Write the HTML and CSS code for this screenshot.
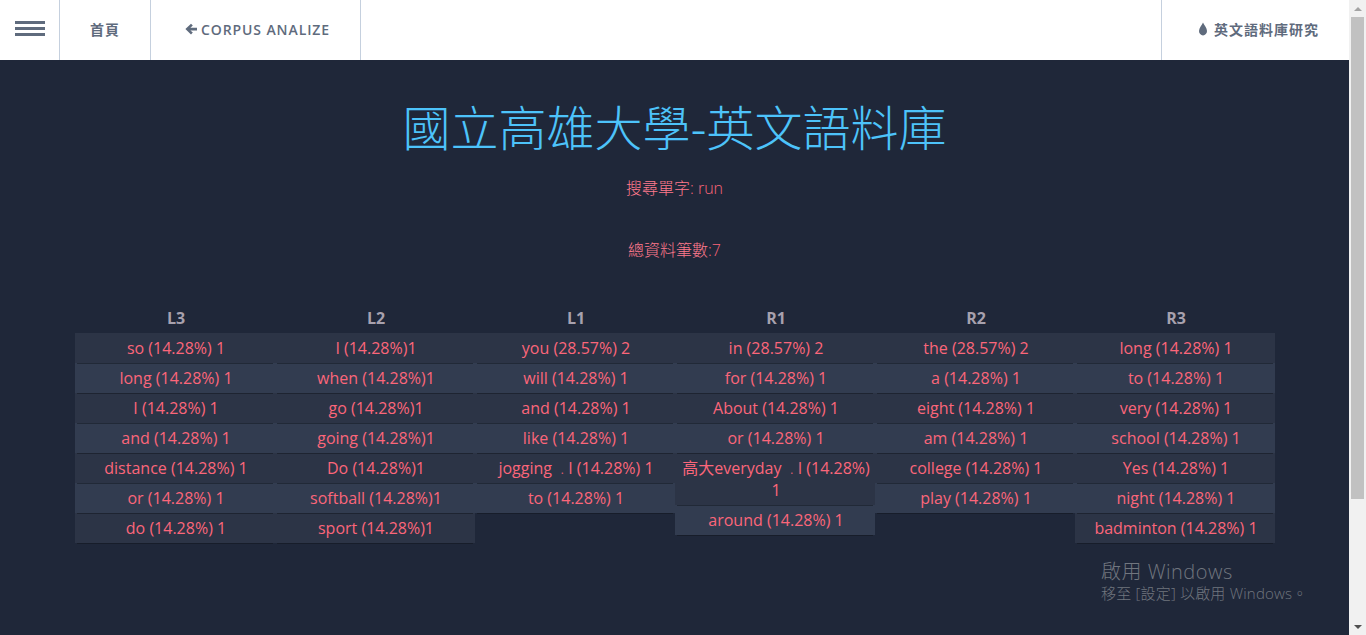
FILE: index.html
```html
<!DOCTYPE html>
<html lang="zh-Hant">
  <head>
    <meta charset="UTF-8" />
    <title>國立高雄大學-英文語料庫</title>
    <link rel="stylesheet" href="styles.css">
  </head>
  <body>
    <div class="page">
      <nav class="topbar">
        <a class="menu-btn" href="#"><span></span><span></span><span></span></a>
        <a class="nav-item nav-home" href="#">首頁</a>
        <a class="nav-item nav-back" href="#">
          <svg class="icon-arrow" viewBox="0 0 12 12"><path d="M6 .8 L7.8 2.6 L5.4 4.8 H12 V7.4 H5.4 L7.8 9.6 L6 11.4 L.4 6.1 Z"/></svg>
          CORPUS ANALIZE
        </a>
        <a class="nav-item nav-right" href="#">
          <svg class="icon-drop" viewBox="0 0 10 14"><path d="M5 0.5 C6 3 9 6 9 9 A4 4.4 0 0 1 1 9 C1 6 4 3 5 0.5 Z"/></svg>
          英文語料庫研究
        </a>
      </nav>

      <main class="content">
        <h1 class="title">國立高雄大學-英文語料庫</h1>
        <p class="info info-word"><span class="zh">搜尋單字</span>: run</p>
        <p class="info info-total"><span class="zh">總資料筆數</span>:7</p>

        <div class="columns">
          <div class="col">
            <h4>L3</h4>
            <div class="cell">so (14.28%) 1</div>
            <div class="cell">long (14.28%) 1</div>
            <div class="cell">I (14.28%) 1</div>
            <div class="cell">and (14.28%) 1</div>
            <div class="cell">distance (14.28%) 1</div>
            <div class="cell">or (14.28%) 1</div>
            <div class="cell">do (14.28%) 1</div>
          </div>
          <div class="col">
            <h4>L2</h4>
            <div class="cell">I (14.28%)1</div>
            <div class="cell">when (14.28%)1</div>
            <div class="cell">go (14.28%)1</div>
            <div class="cell">going (14.28%)1</div>
            <div class="cell">Do (14.28%)1</div>
            <div class="cell">softball (14.28%)1</div>
            <div class="cell">sport (14.28%)1</div>
          </div>
          <div class="col">
            <h4>L1</h4>
            <div class="cell">you (28.57%) 2</div>
            <div class="cell">will (14.28%) 1</div>
            <div class="cell">and (14.28%) 1</div>
            <div class="cell">like (14.28%) 1</div>
            <div class="cell">jogging <span class="dot">﹒</span>I (14.28%) 1</div>
            <div class="cell">to (14.28%) 1</div>
          </div>
          <div class="col">
            <h4>R1</h4>
            <div class="cell">in (28.57%) 2</div>
            <div class="cell">for (14.28%) 1</div>
            <div class="cell">About (14.28%) 1</div>
            <div class="cell">or (14.28%) 1</div>
            <div class="cell"><span class="first-line">高大everyday <span class="dot">﹒</span>I (14.28%)</span> 1</div>
            <div class="cell">around (14.28%) 1</div>
          </div>
          <div class="col">
            <h4>R2</h4>
            <div class="cell">the (28.57%) 2</div>
            <div class="cell">a (14.28%) 1</div>
            <div class="cell">eight (14.28%) 1</div>
            <div class="cell">am (14.28%) 1</div>
            <div class="cell">college (14.28%) 1</div>
            <div class="cell">play (14.28%) 1</div>
          </div>
          <div class="col">
            <h4>R3</h4>
            <div class="cell">long (14.28%) 1</div>
            <div class="cell">to (14.28%) 1</div>
            <div class="cell">very (14.28%) 1</div>
            <div class="cell">school (14.28%) 1</div>
            <div class="cell">Yes (14.28%) 1</div>
            <div class="cell">night (14.28%) 1</div>
            <div class="cell">badminton (14.28%) 1</div>
          </div>
        </div>
      </main>

      <div class="watermark">
        <div class="wm-big">啟用 Windows</div>
        <div class="wm-small">移至 [設定] 以啟用 Windows。</div>
      </div>
    </div>

    <div class="scrollbar">
      <div class="sb-arrow sb-up"></div>
      <div class="sb-thumb"></div>
      <div class="sb-arrow sb-down"></div>
    </div>
  </body>
</html>
```

FILE: styles.css
```css
html, body {
  margin: 0;
  padding: 0;
  height: 100%;
  overflow: hidden;
}
body {
  display: flex;
  font-family: "Open Sans", "Noto Sans CJK TC", sans-serif;
  background: #1f2739;
}
.page {
  position: relative;
  flex: 1;
  min-width: 0;
}

/* barra in alto */
.topbar {
  display: flex;
  height: 60px;
  background: #fff;
}
.topbar a {
  text-decoration: none;
  color: #5f6b7d;
}
.menu-btn {
  box-sizing: border-box;
  width: 60px;
  padding-bottom: 3px;
  display: flex;
  flex-direction: column;
  justify-content: center;
  align-items: center;
  gap: 3px;
  border-right: 1px solid #c5d0de;
}
.menu-btn span {
  display: block;
  width: 30px;
  height: 3px;
  background: #5f6b7d;
}
.nav-item {
  display: flex;
  align-items: center;
  justify-content: center;
  padding-bottom: 2px;
  font-size: 14px;
  font-weight: 600;
  letter-spacing: 1px;
  border-right: 1px solid #c5d0de;
}
.nav-home {
  width: 90px;
  font-weight: 700;
}
.nav-back {
  width: 205px;
  padding-left: 4px;
  gap: 4px;
  letter-spacing: .9px;
}
.nav-right {
  margin-left: auto;
  width: 181px;
  padding-left: 6px;
  gap: 6px;
  font-weight: 700;
  border-right: none;
  border-left: 1px solid #c5d0de;
}
.icon-arrow {
  width: 12px;
  height: 12px;
  fill: #5f6b7d;
}
.icon-drop {
  width: 10px;
  height: 14px;
  fill: #5f6b7d;
}

/* contenuto */
.content {
  padding: 0 75px;
  text-align: center;
}
.title {
  margin: 0;
  padding-top: 30px;
  font-family: "Noto Sans CJK TC", sans-serif;
  font-size: 48px;
  font-weight: 300;
  line-height: 70px;
  color: #4dc3fa;
}
.info {
  margin: 0;
  font-size: 16px;
  font-weight: 300;
  line-height: 22px;
  color: #fb667a;
}
.info .zh {
  color: #ff7a8d;
}
.info-word {
  padding-top: 17px;
}
.info-total {
  padding-top: 40px;
}
.columns {
  display: flex;
  align-items: flex-start;
  margin-top: 39px;
}
.col {
  width: 200px;
  flex: none;
}
.col h4 {
  margin: 0;
  padding-left: 2px;
  height: 33px;
  font-size: 16px;
  font-weight: 700;
  line-height: 36px;
  color: #a7a1ae;
}
.cell {
  position: relative;
  padding: 4px 1px 4px 3px;
  font-size: 16px;
  line-height: 22px;
  color: #fb667a;
}
.cell:nth-of-type(even) {
  background: #323c50;
}
.cell:nth-of-type(odd) {
  background: #2c3446;
}
/* ombra sotto ogni riga */
.cell::after {
  content: "";
  position: absolute;
  left: 2px;
  right: 2px;
  bottom: -1px;
  height: 1px;
  background: rgba(14, 17, 25, .45);
  z-index: 1;
}
.first-line {
  display: block;
}
.dot {
  font-size: 12px;
  line-height: 0;
}

/* scritta di attivazione */
.watermark {
  position: absolute;
  left: 1101px;
  top: 559px;
  color: #71767f;
  pointer-events: none;
}
.wm-big {
  font-size: 20px;
  font-weight: 300;
  letter-spacing: .5px;
  line-height: 26px;
}
.wm-small {
  margin-top: -1px;
  font-size: 15px;
  font-weight: 300;
  letter-spacing: .2px;
  line-height: 18px;
}

/* barra di scorrimento */
.scrollbar {
  width: 17px;
  flex: none;
  display: flex;
  flex-direction: column;
  background: #f1f1f1;
}
.sb-arrow {
  height: 17px;
  flex: none;
  display: flex;
  align-items: center;
  justify-content: center;
}
.sb-arrow::before {
  content: "";
  border-left: 4px solid transparent;
  border-right: 4px solid transparent;
}
.sb-up::before {
  border-bottom: 4px solid #a3a3a3;
}
.sb-down {
  margin-top: auto;
}
.sb-down::before {
  border-top: 4px solid #505050;
}
.sb-thumb {
  height: 482px;
  margin: 0 2px;
  background: #c1c1c1;
}
```
